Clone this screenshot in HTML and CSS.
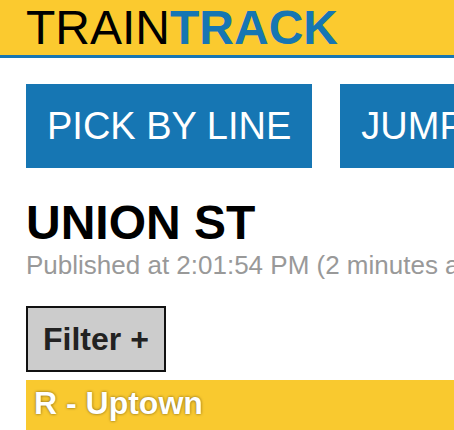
FILE: index.html
```html
<!DOCTYPE html>
<html lang="en">
<head>
<meta charset="utf-8">
<title>TrainTrack</title>
<link rel="stylesheet" href="styles.css">
</head>
<body>
<header class="site-header">
  <span class="brand-train">TRAIN</span><span class="brand-track">TRACK</span>
</header>
<main class="page">
  <nav class="nav">
    <a class="nav-btn" href="#">PICK BY LINE</a>
    <a class="nav-btn" href="#">JUMP TO STATION</a>
  </nav>
  <h1 class="station">UNION ST</h1>
  <p class="published">Published at 2:01:54 PM (2 minutes ago)</p>
  <button class="filter-btn" type="button">Filter +</button>
  <section class="direction">
    <h2 class="direction-title">R - Uptown</h2>
  </section>
</main>
</body>
</html>
```
FILE: styles.css
```css
html, body {
  margin: 0;
  padding: 0;
  background: #fff;
  overflow: hidden;
}

body {
  font-family: "Liberation Sans", Arial, Helvetica, sans-serif;
  color: #000;
}

.site-header {
  height: 55px;
  line-height: 55px;
  padding-left: 26px;
  background: #fbca2f;
  border-bottom: 3px solid #1676b3;
  font-size: 48px;
  white-space: nowrap;
}

.brand-train {
  font-weight: normal;
  color: #000;
}

.brand-track {
  font-weight: bold;
  color: #1676b3;
}

.page {
  padding: 26px 0 0 26px;
}

.nav {
  display: flex;
  gap: 28px;
  white-space: nowrap;
}

.nav-btn {
  flex: none;
  display: block;
  background: #1676b3;
  color: #fff;
  text-decoration: none;
  font-size: 38px;
  line-height: 44px;
  padding: 20px 21px;
}

.station {
  margin: 27px 0 0;
  font-size: 48px;
  line-height: 55px;
  font-weight: bold;
  white-space: nowrap;
}

.published {
  margin: 0;
  font-size: 26px;
  line-height: 30px;
  color: #999;
  white-space: nowrap;
}

.filter-btn {
  display: block;
  margin: 26px 0 0;
  height: 66px;
  padding: 0 15px;
  border: 2px solid #111;
  border-radius: 0;
  background: #ccc;
  color: #222;
  font-family: inherit;
  font-size: 32px;
  font-weight: bold;
  line-height: 62px;
}

.direction {
  margin-top: 8px;
  background: #f9c92f;
  height: 60px;
}

.direction-title {
  margin: 0;
  padding: 5px 8px 0;
  font-size: 32px;
  line-height: 37px;
  font-weight: bold;
  color: #fff;
  text-shadow: 0 0 3px rgba(0, 0, 0, 0.55);
  white-space: nowrap;
}
```
